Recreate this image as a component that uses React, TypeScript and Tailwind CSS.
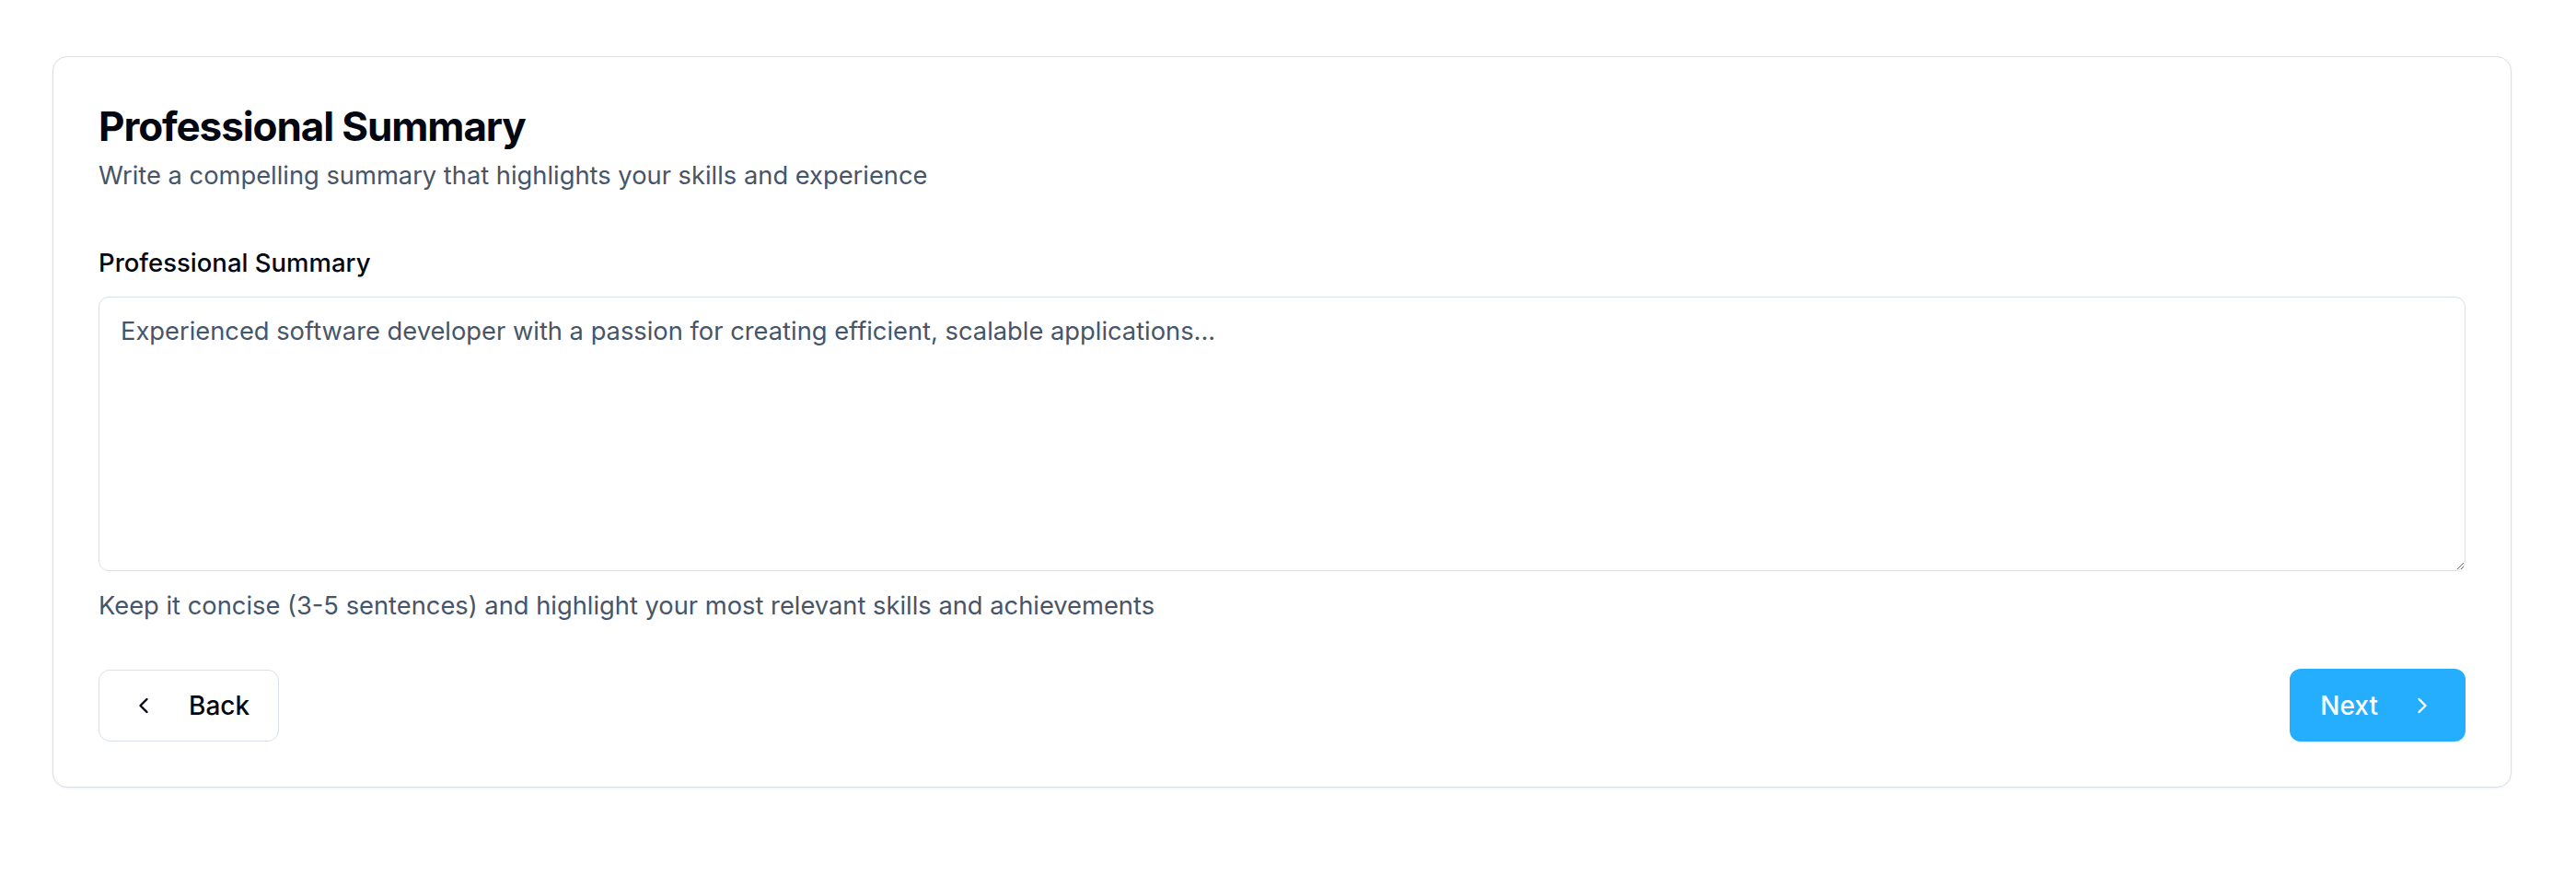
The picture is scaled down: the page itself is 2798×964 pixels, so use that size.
import React from "react";

function ChevronLeft({ className }: { className?: string }) {
  return (
    <svg viewBox="0 0 24 24" fill="none" stroke="currentColor" strokeWidth={2} strokeLinecap="round" strokeLinejoin="round" className={className}>
      <path d="m15 18-6-6 6-6" />
    </svg>
  );
}

function ChevronRight({ className }: { className?: string }) {
  return (
    <svg viewBox="0 0 24 24" fill="none" stroke="currentColor" strokeWidth={2} strokeLinecap="round" strokeLinejoin="round" className={className}>
      <path d="m9 18 6-6-6-6" />
    </svg>
  );
}

export default function App() {
  return (
    <div className="min-h-[964px] w-full bg-white font-['Inter',sans-serif]">
      <div className="pt-[61px] pl-[57px]">
        <div className="w-[2671px] rounded-[16px] border border-[#d9dfec] bg-white px-[49px] pt-[53px] pb-[49px] shadow-[0_1px_3px_rgba(15,23,42,0.06)]">
          <h1 className="text-[44px] font-bold leading-none tracking-tight text-[#030712]">
            Professional Summary
          </h1>
          <p className="mt-[14px] text-[27.3px] leading-[36px] text-[#475569]">
            Write a compelling summary that highlights your skills and experience
          </p>
          <label className="mt-[58px] block text-[27.5px] font-medium leading-[36px] text-[#030712]">
            Professional Summary
          </label>
          <textarea
            className="mt-[19px] block h-[298px] w-full rounded-[11px] border border-[#d9dfec] bg-white px-[23px] pt-[19px] pb-[11px] text-[27.3px] leading-[36px] text-[#475569] placeholder:text-[#475569] outline-none"
            placeholder="Experienced software developer with a passion for creating efficient, scalable applications..."
          />
          <p className="mt-[20px] text-[27.3px] leading-[36px] text-[#475569]">
            Keep it concise (3-5 sentences) and highlight your most relevant skills and achievements
          </p>
          <div className="mt-[50px] flex items-center justify-between">
            <button className="flex h-[78px] items-center gap-[35px] rounded-[12px] border border-[#d9dfec] bg-white pl-[34px] pr-[31px] text-[28px] font-medium text-[#030712]">
              <ChevronLeft className="h-[28px] w-[28px]" />
              <span>Back</span>
            </button>
            <button className="flex h-[79px] items-center gap-[34px] rounded-[12px] bg-[#25aefe] px-[33px] text-[28px] font-medium text-white">
              <span>Next</span>
              <ChevronRight className="h-[28px] w-[28px]" />
            </button>
          </div>
        </div>
      </div>
    </div>
  );
}
